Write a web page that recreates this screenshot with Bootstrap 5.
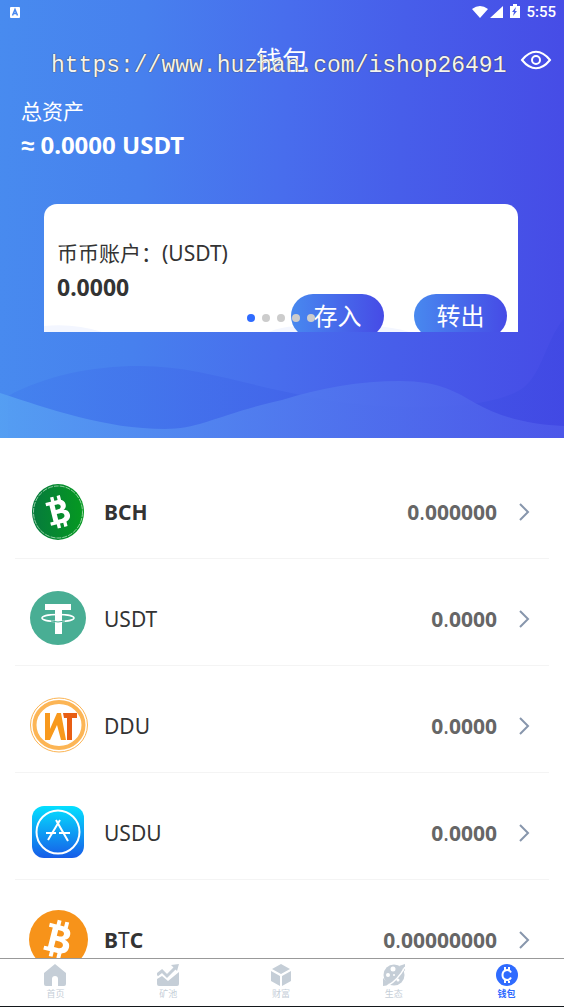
<!DOCTYPE html>
<html lang="zh-CN">
<head>
<meta charset="utf-8">
<meta name="viewport" content="width=device-width, initial-scale=1">
<title>钱包</title>
<link href="https://cdn.jsdelivr.net/npm/bootstrap@5.3.0/dist/css/bootstrap.min.css" rel="stylesheet">
<style>
  body { font-family: "Noto Sans", "Noto Sans CJK SC", sans-serif; color: #333; background: #fff; }
  .app-screen { height: 100vh; overflow: hidden; border-bottom: 1px solid #14181c; }
  .wallet-hero { height: 438px; color: #fff; background: linear-gradient(92deg, #488bef 0%, #4780ee 25%, #486ded 50%, #475eea 70%, #464be6 100%); }
  .hero-waves { height: 132px; bottom: 0; left: 0; }
  .status-bar { height: 24px; padding: 0 8px 0 10px; }
  .clock { font: 500 15px/24px Roboto, sans-serif; margin-left: 6px; }
  .title-bar { height: 72px; }
  .page-title { font-size: 26px; line-height: 72px; font-weight: 400; }
  .eye-btn { right: 12px; top: 26px; }
  .watermark { left: 51px; top: 30px; font: 23px/24px "Liberation Mono", monospace; color: #f4f4f0; text-shadow: 0 0 1px #444, 0 0 1px #444; white-space: nowrap; pointer-events: none; }
  .totals { padding: 0 21px; }
  .label-text { height: 32px; font-size: 21px; line-height: 30px; }
  .colon { font-family: "Noto Sans CJK TC", sans-serif; line-height: 1; }
  .approx { font-family: "Liberation Sans", sans-serif; line-height: 1; }
  .total-text { height: 36px; font-size: 24px; line-height: 34px; font-weight: 700; }
  .account-card { height: 128px; margin: 40px 46px 0 44px; padding: 34px 13px 0; background: #fff; color: #333; border-radius: 13px 13px 0 0; overflow: hidden; }
  .account-card .total-text { font-size: 23px; }
  .card-glow { left: 0; bottom: 0; height: 8px; }
  .card-actions { right: 11px; top: 90px; gap: 30px; }
  .pill-btn { width: 93px; height: 44px; border: 0; border-radius: 22px; color: #fff; font-size: 24px; line-height: 44px; padding: 0; background: linear-gradient(90deg, #4889ef, #464be6); }
  .dots { left: 203px; top: 110px; gap: 7px; }
  .dot { width: 8px; height: 8px; border-radius: 50%; background: #ccc; }
  .dot.current { background: #2f6bff; }
  .coin-list { padding: 14px 15px 0; }
  .coin-row { height: 107px; padding: 14px 19px 0 14px; color: #333; border-bottom: 1px solid #f4f4f4; }
  .coin-name { margin-left: 15px; font-size: 21px; line-height: 28px; }
  .amount { color: #666; font-size: 21px; font-weight: 700; line-height: 28px; margin-right: 21px; }
  .thin { font-weight: 400; }
  .tab-bar { height: 48px; background: #fff; border-top: 1px solid #999; }
  .tab-item { color: #c5ced7; font-size: 9px; line-height: 12px; padding: 5px 2px 0 0; }
  .tab-item.current { color: #2f6bff; font-weight: 700; }
  .tab-item svg { margin-bottom: 2px; }
</style>
</head>
<body>
<div class="app-screen d-flex flex-column position-relative">
  <header class="wallet-hero position-relative flex-shrink-0">
    <svg class="hero-waves position-absolute w-100" viewBox="0 0 564 132" preserveAspectRatio="none" aria-hidden="true">
      <defs>
        <linearGradient id="wave1"><stop offset="0" stop-color="#4380ee"/><stop offset=".5" stop-color="#4164e9"/><stop offset="1" stop-color="#4048e3"/></linearGradient>
        <linearGradient id="wave2"><stop offset="0" stop-color="#57a2f3"/><stop offset=".5" stop-color="#527cef"/><stop offset="1" stop-color="#4e59ea"/></linearGradient>
      </defs>
      <path fill="url(#wave1)" opacity=".75" d="M8 132V90C45 70 90 60 140 60C190 60 230 74 282 85C330 96 370 101 410 101C455 101 495 98 520 84C542 70 544 38 564 12V132Z"/>
      <path fill="url(#wave2)" opacity=".85" d="M0 87C50 103 105 123 165 123C200 123 220 108 282 94C320 82 360 75 400 75C440 75 458 87 475 97C500 111 530 119 564 120V132H0Z"/>
    </svg>
    <div class="position-relative">
      <div class="status-bar d-flex align-items-center">
        <svg width="10" height="11" viewBox="0 0 10 11" aria-hidden="true"><rect width="10" height="11" rx="1" fill="#fff"/><path d="M2.500 8.500 5 2.500 7.500 8.500M3.500 6.500h3" fill="none" stroke="#4888ef" stroke-width="1.500"/></svg>
        <svg class="ms-auto" width="49" height="16" viewBox="0 0 49 16" fill="#fff" aria-hidden="true">
          <path d="M1 5Q9-1 17 5L9 14ZM32 2V14H19Z"/><path d="M39 2h3V0h4v2h3v12H39Z"/><path d="m45 3-4 5h2l-1 4 4-5h-2z" fill="#485ce8"/>
        </svg>
        <span class="clock">5:55</span>
      </div>
      <div class="title-bar position-relative text-center">
        <h1 class="page-title m-0">钱包</h1>
        <button type="button" class="eye-btn btn p-0 border-0 position-absolute d-flex" aria-label="显示资产">
          <svg width="32" height="20" viewBox="0 0 32 20" fill="none" stroke="#fff" stroke-width="2"><path d="M2 10C11-1 21-1 30 10C21 21 11 21 2 10Z"/><circle cx="16" cy="10" r="4"/></svg>
        </button>
        <div class="watermark position-absolute">https://www.huzhan.com/ishop26491</div>
      </div>
      <section class="totals">
        <div class="label-text">总资产</div>
        <div class="total-text"><span class="approx">≈</span> 0.0000 USDT</div>
      </section>
      <section class="account-card position-relative">
        <svg class="card-glow position-absolute w-100" viewBox="0 0 474 8" preserveAspectRatio="none" fill="#f3f6ff" aria-hidden="true"><path d="M0 2Q30-1 58 8H0ZM225 8Q250-3 280 8ZM300 8Q330-3 365 8Z"/></svg>
        <div class="label-text">币币账户<span class="colon">：</span>(USDT)</div>
        <div class="total-text">0.0000</div>
        <div class="card-actions position-absolute d-flex">
          <button type="button" class="pill-btn">存入</button>
          <button type="button" class="pill-btn">转出</button>
        </div>
        <div class="dots position-absolute d-flex">
          <span class="dot current"></span><span class="dot"></span><span class="dot"></span><span class="dot"></span><span class="dot"></span>
        </div>
      </section>
    </div>
  </header>

  <main class="coin-list flex-grow-1 overflow-hidden">
    <a href="#bch" class="coin-row d-flex align-items-center text-decoration-none">
      <svg width="60" height="60" viewBox="0 0 60 60" aria-hidden="true">
        <defs>
          <linearGradient id="green"><stop stop-color="#067a3d"/><stop offset="1" stop-color="#059a20"/></linearGradient>
          <g id="coin-b"><path fill-rule="evenodd" d="M-12-14H2C8-14 11-11 11-7C11-4 10-2 7-1C11 0 13 2 13 6C13 11 9 14 3 14H-12V10H-8V-10H-12ZM-2-9V-3H1C6-3 6-9 1-9ZM-2 2V9H2C8 9 8 2 2 2Z"/><path d="M-5-19h4v6h-4ZM3-19h4v6H3ZM-5 13h4v6h-4ZM3 13h4v6H3Z"/></g>
        </defs>
        <ellipse cx="29" cy="30" rx="26" ry="28" fill="url(#green)"/><ellipse cx="29" cy="30" rx="24.500" ry="26" fill="none" stroke="#b5dfbf" stroke-width=".8" stroke-dasharray="5 1"/>
        <use href="#coin-b" fill="#fff" transform="translate(29 30) rotate(-14) scale(.84)"/></svg>
      <span class="coin-name fw-bold">BCH</span>
      <span class="amount ms-auto">0<span class="thin">.</span>000000</span>
      <svg width="12" height="20" viewBox="0 0 12 20" fill="none" stroke="#8796ac" stroke-width="2" aria-hidden="true"><path d="m2 2 8 8-8 8"/></svg>
    </a>
    <a href="#usdt" class="coin-row d-flex align-items-center text-decoration-none">
      <svg width="60" height="60" viewBox="0 0 60 60" aria-hidden="true"><ellipse cx="29" cy="29" rx="28" ry="27" fill="#49ae94"/><ellipse cx="29" cy="29" rx="16" ry="3.500" fill="none" stroke="#fff" stroke-width="1.500"/><path fill="#fff" d="M16 15h26v6h-9v24h-7V21H16Z"/><path d="M22 32q7 2 14 0" fill="none" stroke="#49ae94"/></svg>
      <span class="coin-name">USDT</span>
      <span class="amount ms-auto">0<span class="thin">.</span>0000</span>
      <svg width="12" height="20" viewBox="0 0 12 20" fill="none" stroke="#8796ac" stroke-width="2" aria-hidden="true"><path d="m2 2 8 8-8 8"/></svg>
    </a>
    <a href="#ddu" class="coin-row d-flex align-items-center text-decoration-none">
      <svg width="60" height="60" viewBox="0 0 60 60" aria-hidden="true"><g fill="none" stroke="#fcb555"><ellipse cx="30" cy="29" rx="28.500" ry="27"/><ellipse cx="30" cy="29" rx="24.500" ry="23" stroke-width="4"/></g><path fill="#f8991d" d="M16 17h5v16l7-16h4l5 27h-5l-4-15-7 15h-5Z"/><path fill="#e85e13" d="M34 17h14v5h-5v22h-5V22h-3Z"/></svg>
      <span class="coin-name">DDU</span>
      <span class="amount ms-auto">0<span class="thin">.</span>0000</span>
      <svg width="12" height="20" viewBox="0 0 12 20" fill="none" stroke="#8796ac" stroke-width="2" aria-hidden="true"><path d="m2 2 8 8-8 8"/></svg>
    </a>
    <a href="#usdu" class="coin-row d-flex align-items-center text-decoration-none">
      <svg width="60" height="60" viewBox="0 0 60 60" aria-hidden="true"><defs><linearGradient id="sky" x2="0" y2="1"><stop stop-color="#04e0ff"/><stop offset="1" stop-color="#175ce8"/></linearGradient></defs><rect x="3" y="3" width="52" height="52" rx="12" fill="url(#sky)"/><g fill="none" stroke="#fff" stroke-width="2"><circle cx="29" cy="29" r="21.500"/><path d="m31 17-12 20M27 17l12 21M17 30h10M30 30h11"/></g></svg>
      <span class="coin-name">USDU</span>
      <span class="amount ms-auto">0<span class="thin">.</span>0000</span>
      <svg width="12" height="20" viewBox="0 0 12 20" fill="none" stroke="#8796ac" stroke-width="2" aria-hidden="true"><path d="m2 2 8 8-8 8"/></svg>
    </a>
    <a href="#btc" class="coin-row d-flex align-items-center text-decoration-none">
      <svg width="60" height="60" viewBox="0 0 60 60" aria-hidden="true"><circle cx="29.500" cy="29.500" r="29.500" fill="#f7931a"/><use href="#coin-b" fill="#fff" transform="translate(29 29) rotate(14) scale(.98)"/></svg>
      <span class="coin-name fw-bold">B<span class="thin">T</span>C</span>
      <span class="amount ms-auto">0<span class="thin">.</span>00000000</span>
      <svg width="12" height="20" viewBox="0 0 12 20" fill="none" stroke="#8796ac" stroke-width="2" aria-hidden="true"><path d="m2 2 8 8-8 8"/></svg>
    </a>
  </main>

  <nav class="tab-bar row row-cols-5 g-0 flex-shrink-0 text-center">
    <a href="#home" class="tab-item col d-flex flex-column align-items-center text-decoration-none"><svg width="22" height="22" viewBox="0 0 22 22" fill="currentColor"><path d="M11 0 22 9V20a2 2 0 0 1-2 2H14V15a3 3 0 0 0-6 0v7H2a2 2 0 0 1-2-2V9Z"/></svg>首页</a>
    <a href="#pool" class="tab-item col d-flex flex-column align-items-center text-decoration-none"><svg width="22" height="22" viewBox="0 0 22 22" fill="currentColor"><path d="m0 15 5-3 6 5 11-9v12a2 2 0 0 1-2 2H2a2 2 0 0 1-2-2Z"/><path d="m0 11 5-4 5 5 9-9" fill="none" stroke="currentColor" stroke-width="3"/><path d="m14 1 8-1-2 7Z"/></svg>矿池</a>
    <a href="#wealth" class="tab-item col d-flex flex-column align-items-center text-decoration-none"><svg width="22" height="22" viewBox="0 0 22 22" fill="currentColor"><path d="m11 0 9 5-9 5-9-5ZM1 7l9 5v10l-9-5ZM21 7l-9 5v10l9-5Z"/></svg>财富</a>
    <a href="#eco" class="tab-item col d-flex flex-column align-items-center text-decoration-none"><svg width="22" height="22" viewBox="0 0 22 22"><circle cx="11" cy="11" r="10.500" fill="currentColor"/><path fill="currentColor" d="M0 22V14l7 7ZM22 0v7l-6-5Z"/><g fill="#fff"><circle cx="10" cy="5" r="2.500"/><circle cx="5" cy="11" r="2"/><circle cx="11" cy="11" r="1"/><circle cx="15" cy="16" r="1.500"/></g><path d="M4 22C10 19 17 12 22 3" fill="none" stroke="#fff" stroke-width="1.500"/></svg>生态</a>
    <a href="#wallet" class="tab-item current col d-flex flex-column align-items-center text-decoration-none" aria-current="page"><svg width="22" height="22" viewBox="0 0 22 22"><circle cx="11" cy="11" r="11" fill="currentColor"/><path d="M15 8.500C13 4.500 6.500 5.500 6.500 11s6.500 6.500 8.500 2.500M9 3v4M13 3v4M9 15v4M13 15v4" fill="none" stroke="#fff" stroke-width="2"/></svg>钱包</a>
  </nav>
</div>
<script src="https://cdn.jsdelivr.net/npm/bootstrap@5.3.0/dist/js/bootstrap.bundle.min.js"></script>
</body>
</html>
